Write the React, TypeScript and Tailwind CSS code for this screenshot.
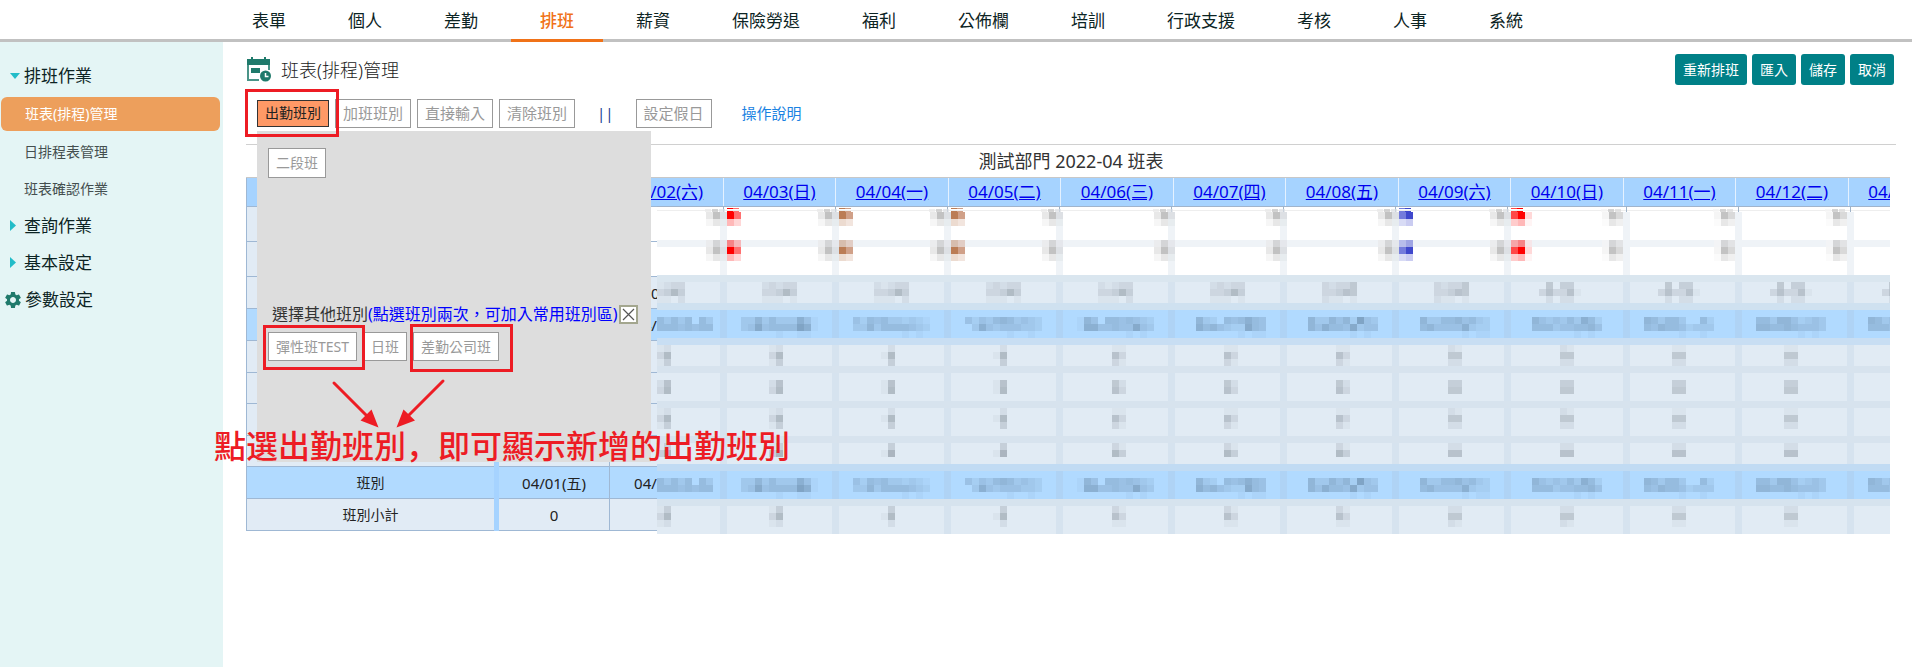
import React, { useState } from 'react';
import { MdSettings } from 'react-icons/md';

const NAV_ITEMS = ['表單', '個人', '差勤', '排班', '薪資', '保險勞退', '福利', '公佈欄', '培訓', '行政支援', '考核', '人事', '系統'];

const SIDE_LINKS = ['班表(排程)管理', '日排程表管理', '班表確認作業'];

const ACTIONS = ['重新排班', '匯入', '儲存', '取消'];

const DAYS = [
  '04/02(六)', '04/03(日)', '04/04(一)', '04/05(二)', '04/06(三)', '04/07(四)',
  '04/08(五)', '04/09(六)', '04/10(日)', '04/11(一)', '04/12(二)', '04/13(三)',
];

type Tone = 'white' | 'light' | 'blue';

interface Summary {
  label: string;
  first: string;
  second: string;
  tone: Tone;
  height: string;
}

const SUMMARY_ROWS: Summary[] = [
  { label: '', first: '', second: '', tone: 'white', height: 'h-[35px]' },
  { label: '', first: '', second: '', tone: 'white', height: 'h-[35px]' },
  { label: '', first: '', second: '0.00', tone: 'light', height: 'h-8' },
  { label: '', first: '', second: '04/02(六)', tone: 'blue', height: 'h-8' },
  { label: '', first: '', second: '', tone: 'light', height: 'h-8' },
  { label: '', first: '', second: '', tone: 'light', height: 'h-[31px]' },
  { label: '', first: '', second: '', tone: 'light', height: 'h-8' },
  { label: '', first: '', second: '', tone: 'light', height: 'h-[31px]' },
  { label: '班別', first: '04/01(五)', second: '04/02(六)', tone: 'blue', height: 'h-8' },
  { label: '班別小計', first: '0', second: '0', tone: 'light', height: 'h-8' },
];

// Masked cells: each digit is the strength of one 7px block, 0 is empty
const BLOCK = 7;

const HOURS = [
  ['0000021233', '0000033474', '0000011102'],
  ['0000023233', '0000033474', '0000011101'],
  ['0000032335', '0000033465', '0000021101'],
  ['0000050440', '0000363361', '0000020220'],
];

const DATES = [
  ['', '0053535053', '0055545455', '000000000000'],
  ['', '00336353337410', '00348455559710', '00000001001100'],
  ['', '00425453323210', '00336355554320', '00000000010100'],
  ['', '00424356534320', '00037434443320', '00000000100100'],
  ['', '0016405545432', '0017744544843', '0000000001010'],
  ['', '0006320545754', '0007564322854', '0000000001011'],
  ['', '0006336462943', '0006475548344', '0000000001010'],
  ['', '0006335564532', '0005644447322', '0000000001011'],
  ['', '0006434353752', '0005553445564', '0000000001010'],
  ['', '006535530052', '005465542333', '000000010010'],
  ['', '005536642343', '006655654443', '000000001010'],
  ['', '0065344334', '0055545434', '000000000000'],
];

// Strength of the digit in each block row, per summary line
const digitRows = (levels: number[], col: number) =>
  levels.map((level) => {
    if (level === 0) return '';
    const side = Math.max(level - 5, 0);
    const half = Math.max(level - 2, 1);
    if (col < 2) return `000000${side + 1}${level}`;
    if (col < 4) return `000000${side ? 1 : 0}${level}`;
    if (col < 7) return `0000000${Math.max(level - 1, 1)}${side + 1}`;
    if (col < 9) return `0000000${Math.max(level - 2, 2)}${half}`;
    return `000000${half}${half}`;
  });

const MARKS: Record<number, string[]> = {
  1: ['#ff0000', '#ff7070'],
  2: ['#bb7c55', '#d0a088'],
  3: ['#bb7c55', '#d0a088'],
  7: ['#747cdc', '#3f48cc'],
  8: ['#ff4848', '#ff0000', '#ffd8d8'],
};

const COL_WIDTHS = [
  'w-[70px]', 'w-[112px]', 'w-[112px]', 'w-[112px]', 'w-[112px]', 'w-[112px]',
  'w-[112px]', 'w-[112px]', 'w-[119px]', 'w-[112px]', 'w-[112px]', 'w-[112px]',
];

interface BlocksProps {
  rows: string[];
  fill: string;
  height: number;
  shift: number;
}

const Blocks: React.FC<BlocksProps> = ({ rows, fill, height, shift }) => (
  <svg width={105 - shift} height={height} viewBox={`${shift} 0 ${105 - shift} ${height}`} className="block" aria-hidden="true">
    {rows.map((row, y) =>
      row.split('').map((level, x) =>
        level === '0' ? null : (
          <rect
            key={`${x}-${y}`}
            x={x * BLOCK}
            y={y * BLOCK}
            width={BLOCK}
            height={BLOCK}
            fill={fill}
            fillOpacity={Number(level) * 0.045}
          />
        )
      )
    )}
  </svg>
);

interface NameCellProps {
  col: number;
  first: boolean;
}

// Edge marks of the two employee rows; they run over the cell borders
const NameCell: React.FC<NameCellProps> = ({ col, first }) => {
  const width = col === 0 ? 63 : col === 8 ? 112 : 105;
  const height = first ? 33 : 28;
  const mid = first ? 5 : 0;
  const marks = MARKS[col] || [];
  const tail = col > 7 ? ['#f5f5f5', '#c3c3c3', '#d9d9d9'] : ['#e8e8e8', '#c2c2c2', '#dde0e4'];
  const tailX = col > 7 ? width - 21 : width - 14;

  return (
    <svg width={width} height={height} className="block overflow-visible" aria-hidden="true">
      {first && <rect x={0} y={0} width={width + 7} height={5} fill="#ffffff" />}
      {first && <rect x={0} y={3} width={width + 7} height={1} fill="#eeeeee" />}
      {first && <rect x={width + 3} y={-1} width={1} height={6} fill="#9fb3c8" />}
      {(col < 11 ? tail : []).map((color, i) => (
        <g key={color} fill={color}>
          <rect x={tailX + i * 7} y={mid} width={7} height={7} />
          <rect x={tailX + i * 7} y={mid + 7} width={7} height={7} opacity={0.4} />
          {first ? (
            <rect x={tailX + i * 7 - 1} y={2} width={6} height={3} opacity={0.7} />
          ) : (
            <rect x={tailX + i * 7} y={-7} width={7} height={7} opacity={0.6} />
          )}
        </g>
      ))}
      {marks.map((color, i) => (
        <g key={color} fill={color}>
          <rect x={i * 7} y={mid} width={7} height={7} />
          <rect x={i * 7} y={mid + 7} width={7} height={7} opacity={0.28} />
          {first && i < 2 && <rect x={i * 6} y={1} width={6} height={1} />}
          {first && i < 2 && <rect x={i * 6} y={4} width={6} height={1} />}
          {!first && <rect x={i * 7} y={-7} width={7} height={7} opacity={0.45} />}
        </g>
      ))}
    </svg>
  );
};

interface MaskedRow {
  kind: 'name' | 'hours' | 'date' | 'digit';
  band: string;
  body: string;
  height: number;
  levels?: number[];
}

const MASKED_ROWS: MaskedRow[] = [
  { kind: 'name', band: 'border-t border-[#a0b4cc]', body: 'border-[#eff3f7] bg-white', height: 33 },
  { kind: 'name', band: 'border-t-[7px] border-[#eff3f7]', body: 'border-[#eff3f7] bg-white', height: 28 },
  { kind: 'hours', band: 'border-t-[7px] border-[#dae6ef]', body: 'border-[#d6e3ef] bg-[#e1ebf4]', height: 21 },
  { kind: 'date', band: 'border-t-[7px] border-[#cfe1f0]', body: 'border-[#afd3f5] bg-[#b1daff]', height: 28 },
  { kind: 'digit', band: 'border-t-[7px] border-[#c8def3]', body: 'border-[#d6e3ef] bg-[#e1ebf4]', height: 21, levels: [2, 7, 4] },
  { kind: 'digit', band: 'border-t-[7px] border-[#d7e3ee]', body: 'border-[#d6e3ef] bg-[#e1ebf4]', height: 28, levels: [0, 6, 7] },
  { kind: 'digit', band: 'border-t-[7px] border-[#d7e3ee]', body: 'border-[#d6e3ef] bg-[#e1ebf4]', height: 28, levels: [2, 7, 4] },
  { kind: 'digit', band: 'border-t-[7px] border-[#d7e3ee]', body: 'border-[#d6e3ef] bg-[#e1ebf4]', height: 21, levels: [4, 8] },
  { kind: 'date', band: 'border-t-[7px] border-[#c1dbf3]', body: 'border-[#afd3f5] bg-[#b1daff]', height: 28 },
  { kind: 'digit', band: 'border-t-[7px] border-[#d6e3ee]', body: 'border-[#d6e3ef] bg-[#e1ebf4]', height: 28, levels: [4, 7, 2] },
];

const MaskedTable: React.FC = () => {
  const renderCell = (row: MaskedRow, rowIndex: number, col: number) => {
    const shift = col === 0 ? 42 : 0;
    if (row.kind === 'name') return <NameCell col={col} first={rowIndex === 0} />;
    if (row.kind === 'hours') {
      const hours = col > 7 ? HOURS[3] : col > 5 ? HOURS[2] : HOURS[col % 2];
      return <Blocks rows={hours} fill="#4a5560" height={row.height} shift={shift} />;
    }
    if (row.kind === 'date') {
      // the first column is cut, so its pattern starts at the cut
      const dates = col === 0 ? DATES[0].map((d) => `0000${d}`) : DATES[col];
      return <Blocks rows={dates} fill="#3a5570" height={row.height} shift={shift} />;
    }
    return <Blocks rows={digitRows(row.levels || [], col)} fill="#4a5560" height={row.height} shift={shift} />;
  };

  return (
    <table className="w-px table-fixed border-separate border-spacing-0">
      <tbody>
        {MASKED_ROWS.map((row, rowIndex) => (
          <tr key={rowIndex}>
            {COL_WIDTHS.map((width, col) => (
              <td key={col} className={`p-0 align-top ${width} ${row.band}`}>
                <div className={`border-r-[7px] ${row.body}`}>{renderCell(row, rowIndex, col)}</div>
              </td>
            ))}
          </tr>
        ))}
      </tbody>
    </table>
  );
};

const SummaryTable: React.FC = () => (
  <table className="w-px table-fixed border-separate border-spacing-0 text-center text-[15px] leading-5">
    <tbody>
      {SUMMARY_ROWS.map((row, i) => {
        const labelTone = row.tone === 'blue' ? 'bg-[#b1daff]' : 'bg-[#e1ebf5]';
        const cellTone = row.tone === 'blue' ? 'bg-[#b1daff]' : row.tone === 'light' ? 'bg-[#e1ebf5]' : 'bg-white';
        return (
          <tr key={i}>
            <th className={`w-[248px] border-b border-l border-[#9fb8d4] p-0 text-sm font-normal ${row.height} ${labelTone}`}>{row.label}</th>
            <td className="w-[5px] bg-[#a6d3ff] p-0" />
            <td className={`w-[111px] border-r border-b border-[#9fb8d4] p-0 ${cellTone}`}>{row.first}</td>
            <td className={`w-[112px] border-b border-[#9fb8d4] p-0 ${cellTone}`}>{row.second}</td>
          </tr>
        );
      })}
    </tbody>
  </table>
);

const ScheduleGrid: React.FC = () => (
  <div className="mr-[6px]">
    <div className="overflow-hidden border-t border-[#c8c8c8] bg-[#a6d3ff]">
      <table className="w-px table-fixed border-separate border-spacing-0 text-center text-[17px] leading-5">
        <thead>
          <tr>
            <th className="h-7 w-[253px] border-l border-[#9fb8d4] p-0" />
            <th className="w-[112px] border-r border-[#e4f1ff] p-0" />
            {DAYS.map((day, i) => (
              <th key={day} className={`border-r border-[#e4f1ff] p-0 font-normal ${i % 2 === 0 ? 'w-[113px]' : 'w-[112px]'}`}>
                <a href={`#${day.slice(0, 5)}`} className="text-[#0000ee] underline">{day}</a>
              </th>
            ))}
          </tr>
        </thead>
      </table>
    </div>
    <div className="flex items-start">
      <div className="w-[411px] shrink-0 overflow-hidden border-t border-[#9fb8d4]">
        <SummaryTable />
      </div>
      <div className="min-w-0 flex-1 overflow-hidden">
        <MaskedTable />
      </div>
    </div>
  </div>
);

const CalendarClock: React.FC = () => (
  <svg width="26" height="25" viewBox="0 0 26 25" fill="none" aria-hidden="true">
    <path d="M2 8v15h11" stroke="#4a9488" strokeWidth="2" />
    <path d="M1 2h23v6H1z" fill="#1f7a6b" />
    <path d="M6 0v4M19 0v4" stroke="#1f7a6b" strokeWidth="2" />
    <path d="M23 8v5" stroke="#4a9488" strokeWidth="2" />
    <path d="M5 11h9v5H5z" fill="#1f7a6b" />
    <circle cx="19.5" cy="19" r="5.5" fill="#1f7a6b" />
    <path d="M19.5 16v3.500h3" stroke="#ffffff" strokeWidth="1.5" />
  </svg>
);

interface ShiftButtonProps {
  label: string;
  className?: string;
}

const ShiftButton: React.FC<ShiftButtonProps> = ({ label, className = 'px-[7px]' }) => (
  <button type="button" className={`border border-[#999999] bg-white text-sm text-[#999999] ${className}`}>
    {label}
  </button>
);

const ShiftPanel: React.FC = () => (
  <div className="absolute top-[33px] left-[11px] h-[331px] w-[394px] bg-[#dddddd] px-[11px] pt-[17px]">
    <ShiftButton label="二段班" className="h-[30px] px-[7px]" />
    <div className="mt-[126px] flex h-5 items-center justify-between pr-0.5 pl-1 text-base">
      <p className="whitespace-nowrap text-[#333333]">
        選擇其他班別<span className="text-[#0000ff]">(點選班別兩次，可加入常用班別區)</span>
      </p>
      <button type="button" aria-label="關閉" className="flex size-[19px] shrink-0 items-center justify-center border-2 border-[#a3a68e] bg-white">
        <svg width="13" height="13" viewBox="0 0 13 13" stroke="#555555" strokeWidth="1.2" aria-hidden="true">
          <path d="M1 1l11 11M12 1L1 12" />
        </svg>
      </button>
    </div>
    <div className="mt-2 flex h-[29px] gap-[6px]">
      <ShiftButton label="彈性班TEST" />
      <ShiftButton label="日班" />
      <ShiftButton label="差勤公司班" />
    </div>
  </div>
);

const Toolbar: React.FC = () => {
  const [mode, setMode] = useState('出勤班別');

  return (
    <div className="relative z-10 mt-[13px] flex h-[30px] items-center gap-[6px] pl-[11px] text-[15px]">
      {['出勤班別', '加班班別', '直接輸入', '清除班別'].map((name) => (
        <button
          key={name}
          type="button"
          onClick={() => setMode(name)}
          className={
            mode === name
              ? 'h-[27px] border border-[#333333] bg-[#ff9966] px-[7px] text-sm text-[#222222]'
              : 'h-[29px] border border-[#999999] bg-white px-[7px] text-[#999999]'
          }
        >
          {name}
        </button>
      ))}
      <span className="mx-4 text-[#1c3f94]">||</span>
      <button type="button" className="h-[29px] border border-[#999999] bg-white px-[7px] text-[#999999]">設定假日</button>
      <a href="#help" className="ml-6 text-[#1a82e2]">操作說明</a>
      <ShiftPanel />
    </div>
  );
};

const Sidebar: React.FC = () => (
  <aside className="w-[223px] shrink-0 bg-[#e4f5f5] pt-[15px] text-[17px] text-[#0c2424]">
    <button type="button" className="flex h-[38px] w-full items-center gap-1 pl-[10px]">
      <svg width="10" height="6" viewBox="0 0 10 6" fill="#22bcc8" aria-hidden="true"><path d="M0 0h10L5 6z" /></svg>
      排班作業
    </button>
    <nav className="text-sm text-[#444f4f]">
      {SIDE_LINKS.map((name, i) => (
        <a
          key={name}
          href={`#side-${i}`}
          className={
            i === 0
              ? 'mt-0.5 mr-[3px] mb-0.5 ml-px flex h-[34px] items-center rounded-md bg-[#ed9f5c] pl-6 text-white'
              : 'flex h-[37px] items-center pl-6'
          }
        >
          {name}
        </a>
      ))}
    </nav>
    {['查詢作業', '基本設定'].map((name) => (
      <button key={name} type="button" className="flex h-[37px] w-full items-center gap-2 pl-[10px]">
        <svg width="6" height="11" viewBox="0 0 6 11" fill="#22bcc8" aria-hidden="true"><path d="M0 0v11l6-5.500z" /></svg>
        {name}
      </button>
    ))}
    <button type="button" className="flex h-[37px] w-full items-center gap-0.5 pl-[3px]">
      <MdSettings size={20} className="text-[#1f7a6b]" />
      參數設定
    </button>
  </aside>
);

// Red call-outs laid over the page
const Annotations: React.FC = () => (
  <div className="pointer-events-none absolute inset-0 z-20">
    <div className="absolute top-[89px] left-[245px] h-[48px] w-[94px] border-3 border-[#ed1c24]" />
    <div className="absolute top-[325px] left-[263px] h-[45px] w-[102px] border-3 border-[#ed1c24]" />
    <div className="absolute top-[324px] left-[410px] h-[48px] w-[103px] border-3 border-[#ed1c24]" />
    <svg width="120" height="52" viewBox="330 378 120 52" className="absolute top-[378px] left-[330px]" fill="#ed1c24" stroke="#ed1c24" aria-hidden="true">
      <path d="M334 383l33 33M443 381l-35 35" strokeWidth="3" strokeLinecap="round" />
      <path d="M378.500 427.500l-18-7 11-11zM396.500 427.500l7-18 11.500 11z" stroke="none" />
    </svg>
    <p lang="zh-Hans" className="absolute top-[423px] left-[214px] font-['Noto_Sans_CJK_SC',sans-serif] text-[32px] leading-[42px] font-medium whitespace-nowrap text-[#ed1c24]">
      點選出勤班別，即可顯示新增的出勤班別
    </p>
  </div>
);

const App: React.FC = () => {
  const [tab, setTab] = useState('排班');

  return (
    <div lang="zh-Hant" className="relative flex min-h-screen flex-col overflow-hidden bg-white font-['Noto_Sans','Noto_Sans_CJK_TC',sans-serif] text-[#222222]">
      <header className="h-[42px] border-b-3 border-[#c1c1c1] pl-[223px] text-[17px]">
        <nav className="flex h-[42px] gap-1">
          {NAV_ITEMS.map((name) => (
            <button
              key={name}
              type="button"
              onClick={() => setTab(name)}
              className={`border-b-3 px-[29px] pt-0.5 whitespace-nowrap ${tab === name ? 'border-[#f07218] font-medium text-[#f07218]' : 'border-transparent text-[#0c2424]'}`}
            >
              {name}
            </button>
          ))}
        </nav>
      </header>
      <div className="flex flex-1">
        <Sidebar />
        <main className="min-w-0 flex-1 pt-3 pr-4 pl-[23px]">
          <div className="flex h-[31px] items-center justify-between">
            <h1 className="flex items-center gap-[9px] text-lg font-light">
              <CalendarClock />
              班表(排程)管理
            </h1>
            <div className="mr-0.5 flex h-full gap-[5px]">
              {ACTIONS.map((name) => (
                <button key={name} type="button" className="rounded-[3px] bg-[#008087] px-2 text-sm text-white">
                  {name}
                </button>
              ))}
            </div>
          </div>
          <Toolbar />
          <hr className="mt-4 border-[#d0d0d0]" />
          <h2 className="flex h-8 items-center justify-center text-lg text-[#333333]">測試部門 2022-04 班表</h2>
          <ScheduleGrid />
        </main>
      </div>
      <Annotations />
    </div>
  );
};

export default App;
